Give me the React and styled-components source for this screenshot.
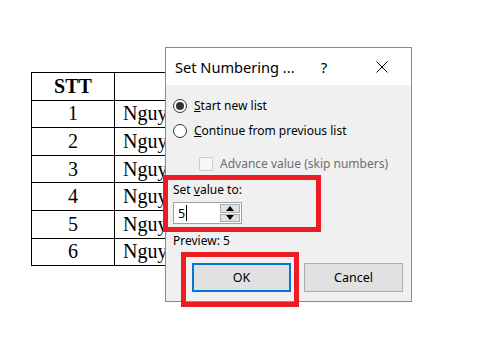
import React from 'react';
import styled, { createGlobalStyle } from 'styled-components';

const GlobalStyle = createGlobalStyle`
  html, body {
    margin: 0;
    padding: 0;
    background: #ffffff;
  }
`;

const Page = styled.div`
  position: relative;
  width: 487px;
  height: 341px;
  overflow: hidden;
  padding: 72px 0 0 31px;
  box-sizing: border-box;
  background: #ffffff;
`;

// document table behind the dialog
const Table = styled.div`
  display: grid;
  grid-template-columns: 83px 240px;
  grid-auto-rows: 27.6px;
  border-top: 1px solid #000;
  border-left: 1px solid #000;
  width: max-content;
  font-family: 'Liberation Serif', 'Times New Roman', serif;
  font-size: 20px;
  color: #000;
`;

const Cell = styled.div`
  border-right: 1px solid #000;
  border-bottom: 1px solid #000;
  display: flex;
  align-items: center;
  justify-content: ${(p) => (p.$center ? 'center' : 'flex-start')};
  padding-left: ${(p) => (p.$center ? '0' : '8px')};
  font-weight: ${(p) => (p.$bold ? 700 : 400)};
  white-space: nowrap;
  overflow: hidden;
`;

const Dialog = styled.div`
  position: absolute;
  left: 165px;
  top: 47px;
  width: 247px;
  height: 255px;
  box-sizing: border-box;
  border: 1px solid #8a8a8a;
  background: #f0f0f0;
  font-family: 'Noto Sans', 'Open Sans', sans-serif;
  font-size: 12px;
  color: #000;
  display: flex;
  flex-direction: column;
`;

const TitleBar = styled.div`
  height: 37px;
  background: #ffffff;
  display: flex;
  align-items: center;
  padding: 0 6px 0 9px;
  flex-shrink: 0;
`;

const Title = styled.div`
  font-size: 14.6px;
  flex: 1;
`;

const TitleButton = styled.div`
  width: ${(p) => p.$w}px;
  margin-left: ${(p) => p.$gap || 0}px;
  display: flex;
  align-items: center;
  justify-content: center;
  font-size: 15px;
`;

const Body = styled.div`
  flex: 1;
  display: flex;
  flex-direction: column;
  padding: 8px 0 0 7px;
`;

const OptionRow = styled.div`
  height: 25px;
  display: flex;
  align-items: center;
  gap: 7px;
  margin-left: ${(p) => p.$indent || 0}px;
  margin-top: ${(p) => p.$top || 0}px;
  color: ${(p) => (p.$disabled ? '#6d6d6d' : '#000')};
`;

const Radio = styled.span`
  width: 14px;
  height: 14px;
  box-sizing: border-box;
  border-radius: 50%;
  border: 1px solid #333;
  background: #fff;
  display: flex;
  align-items: center;
  justify-content: center;

  &::after {
    content: '';
    width: 8px;
    height: 8px;
    border-radius: 50%;
    background: ${(p) => (p.$checked ? '#333' : 'transparent')};
  }
`;

const Checkbox = styled.span`
  width: 14px;
  height: 14px;
  box-sizing: border-box;
  border: 1px solid #cccccc;
  background: #f7f7f7;
`;

const Label = styled.div`
  height: 16px;
  line-height: 16px;
  margin-top: ${(p) => p.$top || 0}px;
`;

const SpinBox = styled.div`
  width: 69px;
  height: 22px;
  box-sizing: border-box;
  margin-top: 4px;
  border: 1px solid #a0a0a0;
  background: #fff;
  display: flex;
  align-items: stretch;
`;

const SpinValue = styled.div`
  flex: 1;
  display: flex;
  align-items: center;
  padding-left: 4px;
  font-size: 12.5px;

  &::after {
    content: '';
    width: 1px;
    height: 16px;
    margin-left: 1px;
    background: #000;
  }
`;

const SpinButtons = styled.div`
  width: 20px;
  display: flex;
  flex-direction: column;
  gap: 1px;
  padding: 1px 1px 1px 0;
`;

const SpinButton = styled.div`
  flex: 1;
  border: 1px solid #adadad;
  background: #e1e1e1;
  display: flex;
  align-items: center;
  justify-content: center;
`;

const Buttons = styled.div`
  display: flex;
  justify-content: flex-end;
  gap: 13px;
  padding-right: 8px;
  margin-top: 14px;
`;

const Button = styled.div`
  width: 99px;
  height: 29px;
  box-sizing: border-box;
  background: #e1e1e1;
  border: ${(p) => (p.$default ? '2px solid #0078d7' : '1px solid #adadad')};
  display: flex;
  align-items: center;
  justify-content: center;
  font-size: 12.5px;
`;

// red annotation frames drawn over the screenshot
const Highlight = styled.div`
  position: absolute;
  left: ${(p) => p.$x}px;
  top: ${(p) => p.$y}px;
  width: ${(p) => p.$w}px;
  height: ${(p) => p.$h}px;
  box-sizing: border-box;
  border: 5px solid #ed1c24;
  pointer-events: none;
`;

const rows = ['1', '2', '3', '4', '5', '6'];

const names = [
  'Nguyễn Văn An',
  'Nguyễn Thị Bình',
  'Nguyễn Văn Cường',
  'Nguyễn Thị Dung',
  'Nguyễn Văn Em',
  'Nguyễn Thị Hoa',
];

const Triangle = ({ up }) => (
  <svg width="8" height="5" viewBox="0 0 8 5">
    <path d={up ? 'M0 5 L4 0 L8 5 Z' : 'M0 0 L4 5 L8 0 Z'} fill="#000" />
  </svg>
);

const App = () => (
  <>
    <GlobalStyle />
    <Page>
      <Table>
        <Cell $center $bold>STT</Cell>
        <Cell />
        {rows.map((n, i) => (
          <React.Fragment key={n}>
            <Cell $center>{n}</Cell>
            <Cell>{names[i]}</Cell>
          </React.Fragment>
        ))}
      </Table>

      <Dialog>
        <TitleBar>
          <Title>Set Numbering ...</Title>
          <TitleButton $w={34}>?</TitleButton>
          <TitleButton $w={46} $gap={18}>
            <svg width="12" height="12" viewBox="0 0 12 12">
              <path d="M0.5 0.5 L11.5 11.5 M11.5 0.5 L0.5 11.5" stroke="#000" strokeWidth="1" />
            </svg>
          </TitleButton>
        </TitleBar>
        <Body>
          <OptionRow>
            <Radio $checked />
            <span><u>S</u>tart new list</span>
          </OptionRow>
          <OptionRow>
            <Radio />
            <span><u>C</u>ontinue from previous list</span>
          </OptionRow>
          <OptionRow $indent={26} $top={8} $disabled>
            <Checkbox />
            <span>Advance value (skip numbers)</span>
          </OptionRow>
          <Label $top={6}>Set <u>v</u>alue to:</Label>
          <SpinBox>
            <SpinValue>5</SpinValue>
            <SpinButtons>
              <SpinButton><Triangle up /></SpinButton>
              <SpinButton><Triangle /></SpinButton>
            </SpinButtons>
          </SpinBox>
          <Label $top={9}>Preview: 5</Label>
          <Buttons>
            <Button $default>OK</Button>
            <Button>Cancel</Button>
          </Buttons>
        </Body>
      </Dialog>

      <Highlight $x={163} $y={175} $w={158} $h={57} />
      <Highlight $x={181} $y={252} $w={118} $h={55} />
    </Page>
  </>
);

export default App;
